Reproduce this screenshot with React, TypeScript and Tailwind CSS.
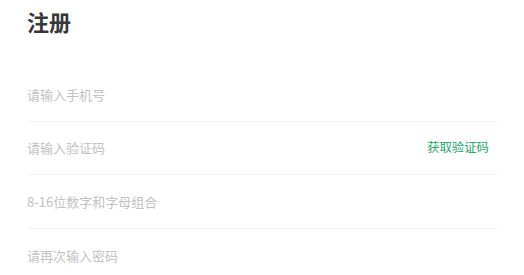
const fields = [
  { placeholder: "请输入手机号", type: "tel" },
  { placeholder: "请输入验证码", type: "text", code: true },
  { placeholder: "8-16位数字和字母组合", type: "password" },
  { placeholder: "请再次输入密码", type: "password", last: true },
];

export default function App() {
  return (
    <div
      className="min-h-screen bg-white px-[27px] pt-[6px]"
      style={{ fontFamily: '"Noto Sans CJK SC", "Noto Sans", sans-serif' }}
    >
      <h1 className="text-[22px] font-bold leading-[30px] text-[#383838]">注册</h1>

      <form className="mt-[32px] flex flex-col">
        {fields.map((f) => (
          <div
            key={f.placeholder}
            className={`flex h-[53.5px] items-center ${f.last ? "" : "border-b border-[#f2f2f2]"}`}
          >
            <input
              type={f.type}
              placeholder={f.placeholder}
              className="min-w-0 flex-1 bg-transparent text-[13px] text-[#333] outline-none placeholder:text-[#c2c2c2]"
            />
            {f.code && (
              <button type="button" className="pr-[8px] text-[12.4px] text-[#28a86a]">
                获取验证码
              </button>
            )}
          </div>
        ))}
      </form>
    </div>
  );
}
